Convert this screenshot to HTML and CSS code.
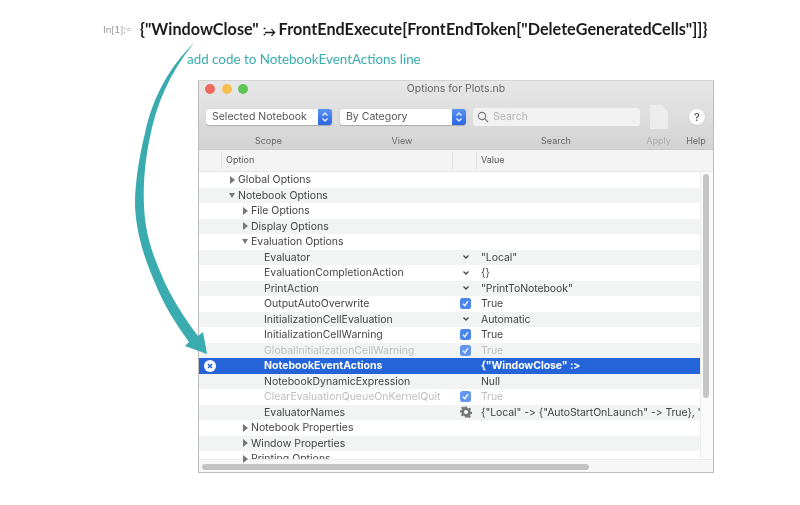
FILE: index.html
```html
<!DOCTYPE html>
<html lang="en">
<head>
<meta charset="utf-8">
<title>Options for Plots.nb</title>
<link rel="stylesheet" href="styles.css">
</head>
<body>
<main class="page">
  <header class="cell">
    <span class="cell-label">In[1]:=</span>
    <code class="cell-code">{"WindowClose" <span class="rule">⧴</span> FrontEndExecute[FrontEndToken["DeleteGeneratedCells"]]}</code>
  </header>
  <p class="note">add code to NotebookEventActions line</p>

  <section class="window">
    <div class="titlebar">
      <div class="lights"><span class="light red"></span><span class="light yellow"></span><span class="light green"></span></div>
      <h1 class="title">Options for Plots.nb</h1>
      <div class="lights-balance"></div>
    </div>
    <div class="toolbar">
      <div class="select scope">Selected Notebook<span class="stepper"><svg viewBox="0 0 8 12" class="updown"><path d="M1.5 4.5 4 2l2.5 2.5M1.5 7.5 4 10l2.500-2.500"/></svg></span></div>
      <div class="select view">By Category<span class="stepper"><svg viewBox="0 0 8 12" class="updown"><path d="M1.500 4.500 4 2l2.500 2.500M1.500 7.500 4 10l2.500-2.500"/></svg></span></div>
      <div class="search"><svg viewBox="0 0 12 12" class="lens"><circle cx="5" cy="5" r="3.600"/><path d="m7.700 7.700 3.300 3.300"/></svg>Search</div>
      <svg viewBox="0 0 18 24" class="doc"><path d="M0 0h12l6 6v18H0z"/></svg>
      <span class="help">?</span>
    </div>
    <div class="labels">
      <span>Scope</span><span>View</span><span>Search</span><span class="lab-apply">Apply</span><span class="lab-help">Help</span>
    </div>
    <div class="colhead">
      <span class="col-gutter"></span><span class="col-option">Option</span><span class="col-ctl"></span><span class="col-value">Value</span>
    </div>
    <div class="body">
      <div class="rows">
        <div class="row"><span></span><span class="name l1"><i class="tri"></i>Global Options</span><span></span><span></span></div>
        <div class="row"><span></span><span class="name l1"><i class="tri open"></i>Notebook Options</span><span></span><span></span></div>
        <div class="row"><span></span><span class="name l2"><i class="tri"></i>File Options</span><span></span><span></span></div>
        <div class="row"><span></span><span class="name l2"><i class="tri"></i>Display Options</span><span></span><span></span></div>
        <div class="row"><span></span><span class="name l2"><i class="tri open"></i>Evaluation Options</span><span></span><span></span></div>
        <div class="row"><span></span><span class="name l3">Evaluator</span><span class="ctl"><svg viewBox="0 0 8 6" class="chev"><path d="m1.500 1.500 2.500 2.500 2.500-2.500"/></svg></span><span class="value">"Local"</span></div>
        <div class="row"><span></span><span class="name l3">EvaluationCompletionAction</span><span class="ctl"><svg viewBox="0 0 8 6" class="chev"><path d="m1.500 1.500 2.500 2.500 2.500-2.500"/></svg></span><span class="value">{}</span></div>
        <div class="row"><span></span><span class="name l3">PrintAction</span><span class="ctl"><svg viewBox="0 0 8 6" class="chev"><path d="m1.500 1.500 2.500 2.500 2.500-2.500"/></svg></span><span class="value">"PrintToNotebook"</span></div>
        <div class="row"><span></span><span class="name l3">OutputAutoOverwrite</span><span class="ctl"><svg viewBox="0 0 11 11" class="check"><rect width="11" height="11" rx="2.500"/><path d="m3 5.700 1.800 2L8 3.200"/></svg></span><span class="value">True</span></div>
        <div class="row"><span></span><span class="name l3">InitializationCellEvaluation</span><span class="ctl"><svg viewBox="0 0 8 6" class="chev"><path d="m1.500 1.500 2.500 2.500 2.500-2.500"/></svg></span><span class="value">Automatic</span></div>
        <div class="row"><span></span><span class="name l3">InitializationCellWarning</span><span class="ctl"><svg viewBox="0 0 11 11" class="check"><rect width="11" height="11" rx="2.500"/><path d="m3 5.700 1.800 2L8 3.200"/></svg></span><span class="value">True</span></div>
        <div class="row dim"><span></span><span class="name l3">GlobalInitializationCellWarning</span><span class="ctl"><svg viewBox="0 0 11 11" class="check"><rect width="11" height="11" rx="2.500"/><path d="m3 5.700 1.800 2L8 3.200"/></svg></span><span class="value">True</span></div>
        <div class="row selected"><span class="gut"><svg viewBox="0 0 12 12" class="clear"><circle cx="6" cy="6" r="6"/><path d="m4 4 4 4M8 4l-4 4"/></svg></span><span class="name l3">NotebookEventActions</span><span></span><span class="value">{"WindowClose" :&gt;</span></div>
        <div class="row"><span></span><span class="name l3">NotebookDynamicExpression</span><span></span><span class="value">Null</span></div>
        <div class="row dim"><span></span><span class="name l3">ClearEvaluationQueueOnKernelQuit</span><span class="ctl"><svg viewBox="0 0 11 11" class="check"><rect width="11" height="11" rx="2.500"/><path d="m3 5.700 1.800 2L8 3.200"/></svg></span><span class="value">True</span></div>
        <div class="row"><span></span><span class="name l3">EvaluatorNames</span><span class="ctl"><svg viewBox="0 0 12 12" class="gear"><path d="M5 .5h2l.3 1.500 1.100.5L9.700 1.600l1.400 1.400-.9 1.300.5 1.100 1.300.600v2l-1.500.3-.5 1.100.9 1.300-1.400 1.400-1.300-.9-1.100.5L7 11.500H5l-.3-1.500-1.100-.5-1.300.9L.9 9l.9-1.300-.5-1.100L0 6.500v-2l1.500-.3.5-1.100-.9-1.300L2.500.4l1.300.9 1-.3z"/><circle class="hole" cx="6" cy="6" r="2"/></svg></span><span class="value">{"Local" -&gt; {"AutoStartOnLaunch" -&gt; True}, "</span></div>
        <div class="row"><span></span><span class="name l2"><i class="tri"></i>Notebook Properties</span><span></span><span></span></div>
        <div class="row"><span></span><span class="name l2"><i class="tri"></i>Window Properties</span><span></span><span></span></div>
        <div class="row"><span></span><span class="name l2"><i class="tri"></i>Printing Options</span><span></span><span></span></div>
      </div>
      <div class="vtrack"><div class="vthumb"></div></div>
    </div>
    <div class="htrack"><div class="hthumb"></div></div>
  </section>

  <svg class="arrow" viewBox="0 0 800 505" aria-hidden="true">
    <path d="M194 43 C168 68 152 100 145 133 C139 158 135 182 135 205 C136 235 146 262 155 283 C163 303 175 323 189 342 L185 346 L207 354 L203 332 L198 336 C186 320 174 302 165 283 C157 264 145 240 144 205 C143 185 145 160 150 137 C156 105 170 72 194 43 Z"/>
  </svg>
</main>
</body>
</html>
```
FILE: styles.css
```css
* { box-sizing: border-box; }
html, body { margin: 0; padding: 0; background: #fff; }
.page { position: relative; width: 800px; height: 505px; overflow: hidden; font-family: Inter, "Liberation Sans", sans-serif; font-variant-ligatures: none; font-feature-settings: "calt" 0; filter: blur(.3px); }

.cell { display: flex; align-items: baseline; height: 47px; padding: 19px 0 0 103px; }
.cell-label { width: 37px; font: 10px Lato, sans-serif; color: #999; position: relative; top: -2px; }
.cell-code { font: 700 16.200px Lato, "DejaVu Sans", sans-serif; color: #1c1c1c; white-space: nowrap; }
.rule { font-size: 13px; }
.note { margin: 0; height: 33px; padding: 2px 0 0 187px; font: 13.400px/20px Lato, sans-serif; color: #3aacb0; }

.window { width: 516px; height: 393px; margin-left: 198px; border: 1px solid #bdbdbd; border-top-color: #d4d4d4; background: #fff; display: flex; flex-direction: column; }
.titlebar { height: 19px; flex: none; display: flex; align-items: center; padding: 0 6px 4px; background: linear-gradient(#e7e7e7, #e2e2e2); }
.lights, .lights-balance { width: 43px; display: flex; gap: 6.500px; }
.light { width: 10px; height: 10px; border-radius: 50%; }
.red { background: #ed6a5f; } .yellow { background: #f5bf4f; } .green { background: #61c554; }
.title { flex: 1; margin: 0; text-align: center; font-size: 10.500px; font-weight: 400; color: #666; }

.toolbar { height: 33px; flex: none; display: flex; align-items: center; padding: 0 0 0 7px; background: linear-gradient(#e2e2e2, #d8d8d8); }
.select { height: 16px; width: 126px; margin-right: 8px; background: #fff; border-radius: 3px; padding-left: 6px; font-size: 10.500px; line-height: 16px; color: #555; position: relative; box-shadow: 0 .5px 1px #aaa; }
.stepper { position: absolute; right: 0; top: 0; width: 14px; height: 16px; background: linear-gradient(#5a92f3, #2d67df); border-radius: 0 3px 3px 0; display: flex; align-items: center; justify-content: center; }
.updown { width: 8px; height: 12px; fill: none; stroke: #fff; stroke-width: 1.100; }
.view { margin-right: 7px; }
.search { width: 167px; height: 18px; background: #f1f1f1; border-radius: 3px; display: flex; align-items: center; padding-left: 4px; gap: 4px; font-size: 10.500px; color: #b4b4b4; }
.lens { width: 12px; height: 12px; fill: none; stroke: #777; stroke-width: 1.100; }
.doc { width: 18px; height: 24px; margin-left: 10px; fill: #ececec; }
.help { width: 16px; height: 16px; margin-left: 21px; border-radius: 50%; background: #fdfdfd; text-align: center; font-size: 11px; line-height: 16px; font-weight: 500; color: #555; box-shadow: 0 .5px 1px #bbb; }

.labels { height: 17px; flex: none; display: grid; grid-template-columns: 139px 128px 180px 25px 1fr; font-size: 9px; line-height: 15px; color: #666; background: linear-gradient(#d8d8d8, #d2d2d2); border-bottom: 1px solid #c9c9c9; text-align: center; }
.labels span { white-space: nowrap; }
.lab-apply { color: #aaa; }
.lab-help { padding-left: 8px; }

.colhead { height: 22px; flex: none; display: grid; grid-template-columns: 23px 231px 24px 1fr; background: #f4f4f4; font-size: 9px; line-height: 19px; color: #555; border-bottom: 1px solid #e8e8e8; }
.col-gutter, .col-ctl, .col-option { border-right: 1px solid #e2e2e2; margin: 2px 0; line-height: 15px; }
.col-option { padding-left: 4px; }
.col-value { padding-left: 4px; line-height: 19px; }

.body { flex: 1; min-height: 0; display: flex; overflow: hidden; }
.rows { flex: 1; min-width: 0; }
.row { height: 15.500px; display: grid; grid-template-columns: 24px 231px 23px minmax(0, 1fr); align-items: center; font-size: 10.500px; line-height: 15.500px; color: #444; white-space: nowrap; overflow: hidden; }
.row:nth-child(even) { background: #f2f4f4; }
.name { display: flex; align-items: center; }
.l1 { padding-left: 15px; } .l2 { padding-left: 28px; } .l3 { padding-left: 41px; }
.tri { width: 0; height: 0; position: absolute; margin-left: -8.500px; border-style: solid; border-width: 4px 0 4px 5.500px; border-color: transparent transparent transparent #777; }
.tri.open { border-width: 5.500px 3.500px 0 3.500px; border-color: #777 transparent transparent; margin-left: -9px; }
.value { padding-left: 4px; overflow: hidden; letter-spacing: -.08px; }
.ctl { display: flex; justify-content: center; align-items: center; }
.chev { width: 8px; height: 6px; fill: none; stroke: #444; stroke-width: 1.300; }
.check { width: 11px; height: 11px; }
.check rect { fill: #4a86ee; }
.check path { fill: none; stroke: #fff; stroke-width: 1.300; }
.gear { width: 12px; height: 12px; fill: #777; }
.gear .hole { fill: #fff; }
.dim .name, .dim .value { color: #bdbdbd; }
.dim .check { opacity: .85; }
.row.selected { background: #2563d8; color: #fff; font-weight: 700; }
.gut { display: flex; padding-left: 5px; }
.clear { width: 12px; height: 12px; }
.clear circle { fill: #fff; }
.clear path { stroke: #2563d8; stroke-width: 1.500; }

.vtrack { width: 13px; flex: none; background: #fafafa; border-left: 1px solid #ececec; padding: 2px 3px 0 2px; }
.vthumb { width: 6px; height: 224px; border-radius: 3px; background: #c6c6c6; }
.htrack { height: 13px; flex: none; background: #f7f7f7; border-top: 1px solid #ececec; padding: 4px 0 0 3px; }
.hthumb { width: 387px; height: 6px; border-radius: 3px; background: #c4c4c4; }

.arrow { position: absolute; left: 0; top: 0; width: 800px; height: 505px; fill: #3aacb0; pointer-events: none; }
```
